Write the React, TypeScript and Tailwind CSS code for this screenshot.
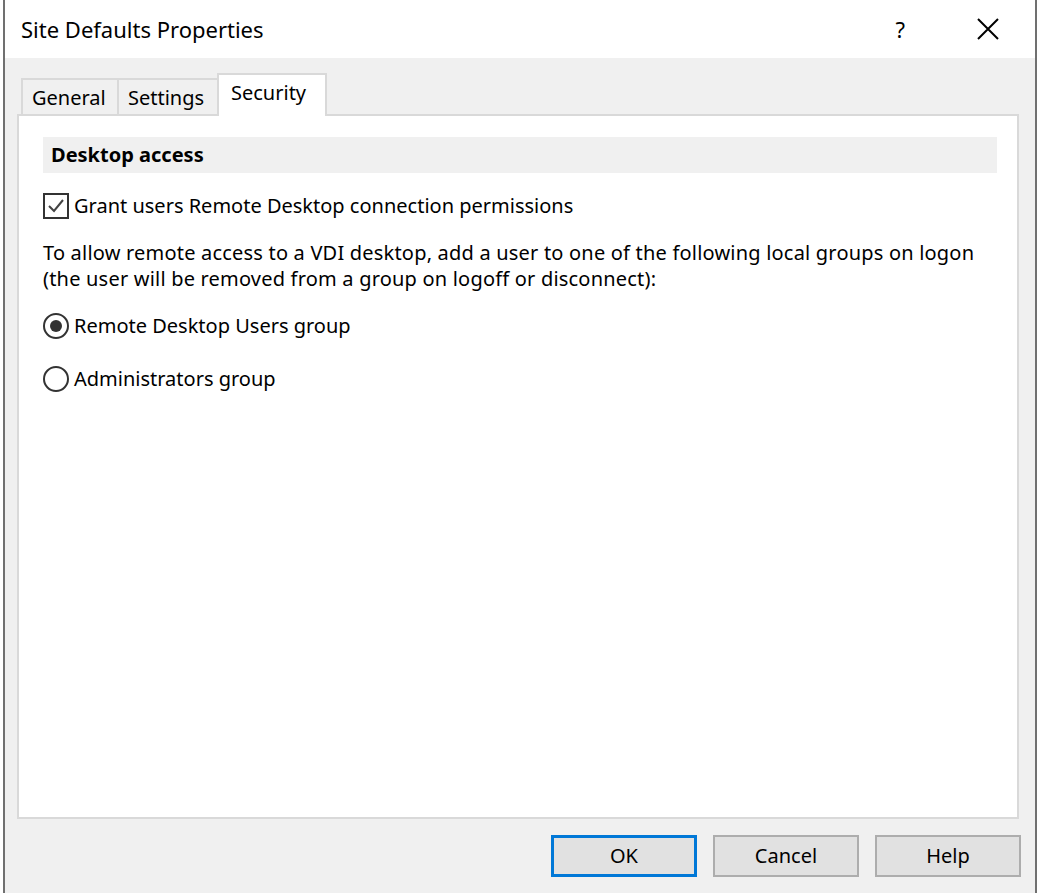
import React from "react";

const font = { fontFamily: '"Noto Sans", "Open Sans", sans-serif' };

function Tab({ label, active, first }: { label: string; active?: boolean; first?: boolean }) {
  if (active) {
    return (
      <div className="relative z-10 -ml-[2px] -mb-[2px] h-[43px] w-[110px] border-2 border-b-0 border-[#d9d9d9] bg-white pl-[12px] pt-[3px] text-[20px] text-black">
        {label}
      </div>
    );
  }
  return (
    <div className={`h-[36px] border-2 border-b-0 border-[#d9d9d9] bg-[#f0f0f0] pl-[9px] pt-[3px] text-[20px] text-black ${first ? "w-[98px]" : "-ml-[2px] w-[102px]"}`}>
      {label}
    </div>
  );
}

function Radio({ checked, label }: { checked?: boolean; label: string }) {
  return (
    <div className="flex items-center h-[26px]">
      <div className="flex h-[26px] w-[26px] items-center justify-center rounded-full border-2 border-[#333333] bg-white">
        {checked && <div className="h-[12px] w-[12px] rounded-full bg-[#333333]" />}
      </div>
      <span className="ml-[5px] text-[20px] text-black">{label}</span>
    </div>
  );
}

function Btn({ label, primary }: { label: string; primary?: boolean }) {
  return (
    <div
      className={`flex h-[42px] w-[146px] items-center justify-center bg-[#e1e1e1] text-[20px] text-black ${
        primary ? "border-[3px] border-[#0078d7]" : "border-2 border-[#adadad]"
      }`}
    >
      {label}
    </div>
  );
}

export default function App() {
  return (
    <div className="flex h-[893px] w-[1037px] bg-white" style={font}>
      <div className="w-[3px] bg-white" />
      <div className="flex flex-1 flex-col border-x-2 border-[#707070] bg-[#f0f0f0]">
        {/* title bar */}
        <div className="flex h-[58px] items-center bg-white">
          <span className="ml-[16px] text-[22px] text-black">Site Defaults Properties</span>
          <div className="flex-1" />
          <span className="mr-[72px] text-[22px] text-black">?</span>
          <svg width="22" height="22" viewBox="0 0 22 22" className="mr-[36px]">
            <path d="M1 1 L21 21 M21 1 L1 21" stroke="#000" strokeWidth="2" />
          </svg>
        </div>
        {/* body */}
        <div className="flex flex-1 flex-col pl-[12px] pr-[16px] pt-[15px] pb-[16px]">
          <div className="flex items-end pl-[4px]">
            <Tab label="General" first />
            <Tab label="Settings" />
            <Tab label="Security" active />
          </div>
          <div className="flex-1 border-2 border-[#d9d9d9] bg-white pl-[24px] pr-[20px] pt-[21px]">
            <div className="flex h-[36px] items-center bg-[#f0f0f0] pl-[8px] text-[20px] font-bold text-black">
              Desktop access
            </div>
            <div className="mt-[20px] flex h-[26px] items-center">
              <div className="flex h-[26px] w-[26px] items-center justify-center border-2 border-[#333333] bg-white">
                <svg width="20" height="20" viewBox="0 0 20 20">
                  <path d="M3 10 L8 15 L17 4" stroke="#444" strokeWidth="2" fill="none" />
                </svg>
              </div>
              <span className="ml-[5px] text-[20px] text-black">Grant users Remote Desktop connection permissions</span>
            </div>
            <p className="mt-[21px] text-[20px] leading-[26px] tracking-[0.2px] text-black">
              To allow remote access to a VDI desktop, add a user to one of the following local groups on logon
              <br />
              (the user will be removed from a group on logoff or disconnect):
            </p>
            <div className="mt-[21px]">
              <Radio checked label="Remote Desktop Users group" />
            </div>
            <div className="mt-[27px]">
              <Radio label="Administrators group" />
            </div>
          </div>
          <div className="-mr-[2px] mt-[16px] flex justify-end gap-[16px]">
            <Btn label="OK" primary />
            <Btn label="Cancel" />
            <Btn label="Help" />
          </div>
        </div>
      </div>
    </div>
  );
}
